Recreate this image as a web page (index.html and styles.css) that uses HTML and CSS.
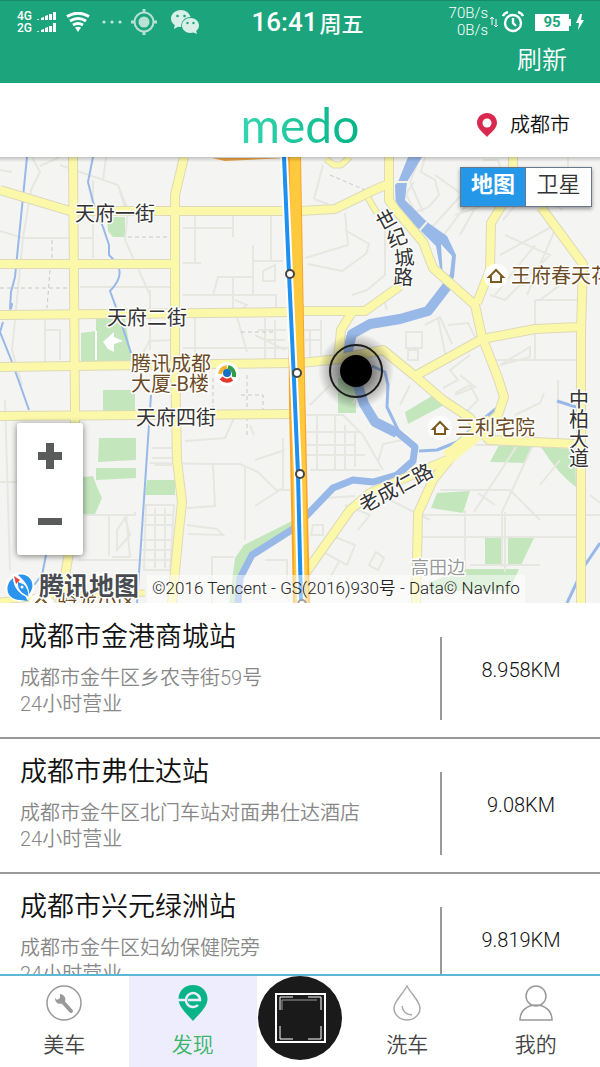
FILE: index.html
```html
<!DOCTYPE html>
<html lang="zh-CN">
<head>
    <meta charset="UTF-8">
    <meta name="viewport" content="width=device-width, initial-scale=1.0">
    <title>medo - 发现</title>
    <link rel="stylesheet" href="styles.css">
</head>
<body>
<div class="app">

    <div class="topbar">
        <div class="status">
            <div class="status-left">
                <div class="network"><span>4G</span><span>2G</span></div>
                <svg class="icon" width="20" height="22" viewBox="0 0 20 22" fill="#fff">
                    <path d="M0 9l3-1v1zM5 7l3-1v3H5zM9 5l3-1v5H9zM13 3h3v6h-3zM17 1h3v8h-3zM0 21l3-1v1zM5 19l3-1v3H5zM9 17l3-1v5H9zM13 15h3v6h-3zM17 12h3v9h-3z"/>
                </svg>
                <svg class="icon wifi" width="24" height="20" viewBox="0 0 24 20" fill="none" stroke="#fff" stroke-width="3">
                    <path d="M1 4.500Q12-2 23 4.500M4 9Q12 4 20 9M7 13Q12 10 17 13"/>
                    <path d="M9 15.500Q12 14 15 15.500L12 20z" fill="#fff" stroke="none"/>
                </svg>
                <svg class="icon dots" width="20" height="4" viewBox="0 0 20 4" fill="#c5e8dc">
                    <circle cx="2" cy="2" r="1.600"/><circle cx="10" cy="2" r="1.600"/><circle cx="18" cy="2" r="1.600"/>
                </svg>
                <svg class="icon locate" width="26" height="26" viewBox="0 0 26 26" fill="none" stroke="#b9e2d5" stroke-width="2">
                    <circle cx="13" cy="13" r="9.500"/>
                    <circle cx="13" cy="13" r="5.500" fill="#b9e2d5" stroke="none"/>
                    <path d="M13 0v4M13 22v4M0 13h4M22 13h4" stroke-width="3"/>
                </svg>
                <svg class="icon" width="28" height="24" viewBox="0 0 28 24" fill="#d9f0e8">
                    <path d="M10 0C4.500 0 0 3.800 0 8.500c0 2.700 1.400 5 3.700 6.500L3 19l4-2.300c1 .2 2 .3 3.200.3C10 11 14 7 19.500 7 18.500 3 14.500 0 10 0z"/>
                    <path d="M19.500 8C14.800 8 11 11.300 11 15.500S14.800 23 19.500 23c1 0 2-.1 3-.4L26 24l-.8-3c1.700-1.400 2.800-3.300 2.800-5.500C28 11.300 24.200 8 19.500 8z"/>
                    <g fill="#1ca57c"><circle cx="6.500" cy="6" r="1.300"/><circle cx="13.500" cy="6" r="1.300"/><circle cx="16.500" cy="13" r="1.200"/><circle cx="22.500" cy="13" r="1.200"/></g>
                </svg>
            </div>
            <div class="clock">16:41<span class="weekday">周五</span></div>
            <div class="status-right">
                <div class="speed"><span>70B/s</span><span>0B/s</span></div>
                <svg class="icon" width="8" height="12" viewBox="0 0 8 12" fill="none" stroke="#fff">
                    <path d="M2 9V1M0 3l2-2 2 2M6 3v8M4 9l2 2 2-2"/>
                </svg>
                <svg class="icon alarm" width="22" height="22" viewBox="0 0 22 22" fill="none" stroke="#fff" stroke-width="2.400">
                    <circle cx="11" cy="12" r="8"/>
                    <path d="M11 7v5l3 3M1 5Q2 2 6 1M21 5Q20 2 16 1"/>
                </svg>
                <div class="battery">95</div>
                <svg class="icon bolt" width="8" height="16" viewBox="0 0 8 16" fill="#fff"><path d="M4 0L0 9h3L2 16l6-10H5l1-6z"/></svg>
            </div>
        </div>
        <div class="toolbar"><button class="refresh" type="button">刷新</button></div>
    </div>

    <header class="header">
        <h1 class="logo">medo</h1>
        <button class="city" type="button">
            <svg width="20" height="24" viewBox="0 0 20 24">
                <path d="M10 0C4.500 0 0 4.400 0 9.700 0 16 7 20 10 24c3-4 10-8 10-14.300C20 4.400 15.500 0 10 0z" fill="#d9294f"/>
                <circle cx="10" cy="10" r="4.500" fill="#fff"/>
            </svg>
            成都市
        </button>
    </header>

    <section class="map" aria-label="地图">
        <svg class="map-canvas" viewBox="0 157 600 446" preserveAspectRatio="xMidYMid slice">
            <defs>
                <radialGradient id="halo">
                    <stop offset="0.400" stop-color="#000" stop-opacity="0.500"/>
                    <stop offset="1" stop-color="#000" stop-opacity="0"/>
                </radialGradient>
                <g id="roads">
                    <path d="M73 157L75 410V520L60 603"/>
                    <path d="M184 157L175 195V360L177 460L182 502L178 540L172 603"/>
                    <path d="M0 190L70 211H290M0 264H173M0 315L110 314L290 312M0 367L290 363M0 416L290 414"/>
                    <path d="M300 211L335 209L372 191L388 184M389 157V200L395 209L423 242L433 268L475 305L482 337L498 378L504 397L498 415L457 450L433 480L418 513L416 603"/>
                    <path d="M300 311L365 311L400 286M352 312L341 330L338 360M300 363L340 359L383 350L415 376L443 400L470 418L489 440L576 444"/>
                    <path d="M415 376L482 339L535 329L578 327M513 157V175M502 205L491 223L490 270L477 303M541 207L583 264L581 330V603"/>
                    <path d="M302 578L350 510L370 493L447 460"/>
                </g>
            </defs>

            <rect y="157" width="600" height="446" fill="#f4f4f3"/>

            <g class="park">
                <path d="M107 217h18v20h-12l-5-6zM81 333l15-2v-12h29l7 42H81zM103 390h32v21h-32zM99 438h37v22l-38 2zM96 468h40v10l-40 2zM83 477l10-1 4 11 5 11-7 16H83zM147 480h28v15h-30z"/>
                <path d="M338 378h18v35h-18zM405 412l27-16 14 8-38 20zM500 443l33 3-8 17-35-1zM541 447l34 2 1 38q-18-13-35-40zM437 493l33-2-7 22-32-5zM485 538h18v27h-18zM508 538h26l-13 27h-13zM462 569h57l-10 22h-80v-8z"/>
                <path d="M292 521L244 545L235 558L229 603h10l5-35 12-15 37-23z"/>
            </g>
            <path d="M95 331h2v29h-2zM103 342l11-10v5l9 4-9 3v8l-6-3z" fill="#fff"/>

            <g class="lane">
                <path d="M0 170l12 2M32 157l8 15L31 190 23 238 13 340 12 350 22 385M40 166l20-9M60 165l58 20 8 26M106 157l-3 23M0 231l23 7h47M80 238h12M93 180v78M118 185l10 25-3 30 25 55v45l-12 22M80 287h90M150 290v60M148 341l27-1"/>
                <path d="M45 320v46M45 330h15v30M0 482h17M5 400l5 170M85 515h50v-3M109 514v42M126 514l4 43h-18M117 530l8-12 5 17-13 15zM183 228h50M195 215v48M183 263h18M233 215v22M253 245v50M271 215v47M253 261h30M233 277v35M213 295l5-18h36M183 295h93v17M275 265v16h-12v-10z"/>
                <path d="M195 317v50M183 348h107M237 317l10 35M265 318v45M275 320v43M258 330h28M265 340h20M235 300l12 5-10 8M255 335l30 15M152 448h20M152 458h22M154 465h18M146 505h28l-4 65h-26zM144 515h29M143 525h30M142 540h29M142 550h28M155 508v60M165 508v60M138 560h32"/>
                <path d="M185 441l40-3 10-22M150 463l64 1 26 0 18 8 18 18h14M213 464l2 42-28 2M245 465v75M250 425l4 10M255 460l30-10M283 438v50l-28 18M187 525l30 4 6 6-35-1M212 603v-46h22M265 560h22v40M78 560h60"/>
                <path d="M314 199l9-34M314 199l14 5M345 213l3 32-43 13M345 230l24 14-3 10-24 17-34-7M385 215v60l-18 15-15 5M384 300l3 10M414 182l-8 12 9 18 14-5 10-12-4-15-14-8 4-15M420 157l-10 25 13 30M425 235l50-55M435 175l35 25-30 40M455 215l45-15M460 235l25-45M483 160h15l5 15M503 220l25-30 35 20M505 235l45 20-45 45-15-5M500 255l55-30M495 295l40-50M540 300l20-15M568 157v18M557 225l-30 70"/>
                <path d="M535 300v60h45M495 360h85M535 300h45M406 332h16v16h-16zM408 350h10v10h-10zM438 318l8 40M425 325l15-8 12 27M448 325l20-2 10 20-25 8M470 355l-20 15 8 10-15 8M500 365l30-18v10zM460 375l15 12-20 8M310 330v28M321 320v38M303 330h18M305 340h17"/>
                <path d="M305 415h38l20 20 20 35M305 432h55M305 445h50M305 455h60M317 415v55M335 415v55M345 425v45M355 432v35M310 470h70M365 385l-12 18M330 385l-20 20M378 462l5-18 23-5M410 385l-10 20M455 393l15-8 8 15-12 12M515 415l25-12 4-10M558 380v60M475 445l50 0M532 447l-30 65v55M516 447l-42 65M440 490h70l30 30M420 515h180M422 537h155M465 510v60M505 512v60M470 565h70M478 493l17 12M540 485l20-25M590 495l10 8"/>
                <path d="M310 510l15-12 30-2M345 505l25 10-12 15M330 535l25 10-8 20-27-15M376 552l8 6-6 12-9-5zM340 560l-20 35M313 525h10v10h-12zM320 550l-10 20M390 500l40 20"/>
            </g>
            <g class="path-dash"><path d="M52 240v25M50 270l-3 38M0 288h70M128 237h42M330 175l35 15M241 332h35M213 378v30M247 375v60M241 395h22v18h-20"/></g>

            <g class="water">
                <path d="M27 157l-4 40-8 80-4 15-1 17 2-5 -1 5M3 322l-3 10 12 30 17 48M93 157l-5 25 5 20 10 25 6 18 0 10 5 5M119 269q3 10-9 22l3 8 5 14 13 40M151 395L137 603M47 550l-5 25-8 10" stroke-width="2"/>
                <path d="M448 285L428 311L400 319L370 324L352 334L348 350L356 380L364 404L375 422L397 433" stroke-width="10"/>
                <path d="M397 432L415 447L413 461L397 475L373 482L353 480L333 488L310 512L293 529L252 555L240 578L238 603" stroke-width="7"/>
                <path d="M372 366l13 6 3 13-1 22 12 25M419 451l18-1 20-8 20-18 20-16M557 401l25 8M600 543l-15 22-18 38" stroke-width="3"/>
            </g>
            <path class="river" d="M408 157h14l-15 25-2 18 22 22 20 14 9 19-2 22-5 10-5-2 6-11 2-18-11-12 2 35-2-5-5-28-16-16-24-20-1-25 3-3z"/>
            <path d="M396 182h14M419 231l8-9" stroke="#f4f4e4" stroke-width="2"/>

            <use href="#roads" class="casing"/>
            <use href="#roads" class="road"/>
            <path class="casing minor" d="M368 198l9 15M326 159l8 6h7l9-8M0 601l50-5 95-3"/>
            <path class="road minor" d="M368 198l9 15M326 159l8 6h7l9-8M0 601l50-5 95-3"/>
            <path class="junction" d="M447 458l45-37"/>
            <path d="M212 158h75l-62 3z" fill="#e8a040"/>

            <path d="M287 157h14l4 223 5 223h-17l-4-200z" fill="#f8a52b"/>
            <path d="M290 157h10l4 223 4 223h-13l-4-200z" fill="#ffc93e"/>
            <path d="M284 157L289 274L294 380L298 474L301 603" fill="none" stroke="#fff" stroke-width="8"/>
            <path d="M284 157L289 274L294 380L298 474L301 603" fill="none" stroke="#1e90f0" stroke-width="4"/>
            <g fill="#fff" stroke="#444" stroke-width="2">
                <circle cx="290" cy="274" r="4"/><circle cx="297" cy="373" r="4"/><circle cx="300" cy="474" r="4"/><circle cx="302" cy="604" r="4"/>
            </g>

            <g class="street">
                <text x="75" y="221">天府一街</text>
                <text x="107" y="325">天府二街</text>
                <text x="136" y="425">天府四街</text>
                <text x="381 390 395 393" y="231 248 266 284" rotate="-28 -20 -6 2">世纪城路</text>
                <text x="569 569 569 569" y="407 427 447 466">中柏大道</text>
                <text transform="translate(364 513) rotate(-28)">老成仁路</text>
            </g>
            <g class="place">
                <text x="131" y="371">腾讯成都</text>
                <text x="131" y="391">大厦-B楼</text>
                <text x="511" y="283">王府春天花园</text>
                <text x="455" y="435">三利宅院</text>
                <text x="57" y="609">骑龙小区</text>
            </g>
            <text class="village" x="411" y="574">高田边</text>

            <circle cx="227" cy="374" r="12" fill="#fff"/>
            <g fill="none" stroke-width="4">
                <path d="M220 374q1-6 7-7" stroke="#f2b52b"/>
                <path d="M228 367q7 2 6 10" stroke="#2f9e44"/>
                <path d="M232 379q-6 4-11-1" stroke="#e23a2e"/>
            </g>
            <circle cx="227" cy="373" r="4" fill="#1670c4"/>
            <g fill="#fff"><circle cx="496" cy="276" r="12"/><circle cx="440" cy="428" r="12"/><circle cx="41" cy="605" r="12"/></g>
            <g fill="none" stroke="#7a5a20" stroke-width="2">
                <path d="M489 277l7-7 7 7h-2v5h-10v-5zM433 429l7-7 7 7h-2v5h-10v-5zM35 604l6-6 6 6"/>
            </g>

            <circle cx="356" cy="371" r="38" fill="url(#halo)"/>
            <circle cx="356" cy="371" r="26" fill="none" stroke="#1c1c1c" stroke-width="2"/>
            <circle cx="356" cy="371" r="16"/>
        </svg>

        <div class="map-type">
            <button class="type-btn selected" type="button">地图</button>
            <button class="type-btn" type="button">卫星</button>
        </div>

        <div class="zoom">
            <button type="button" aria-label="放大">
                <svg width="24" height="26" viewBox="0 0 24 26" fill="#5a5c5c"><path d="M8 0h8v9h8v8h-8v9H8v-9H0V9h8z"/></svg>
            </button>
            <button type="button" aria-label="缩小">
                <svg width="24" height="8" viewBox="0 0 24 8" fill="#5a5c5c"><path d="M0 0h24v7H0z"/></svg>
            </button>
        </div>

        <div class="map-credit">
            <svg width="30" height="30" viewBox="0 0 30 30">
                <circle cx="15" cy="15" r="14.500" fill="#fff"/>
                <path d="M8 6C-2 14 2 28 15 28l8 1-3-5C14 22 8 14 8 6z" fill="#2a94ee"/>
                <path d="M13 3c12-3 19 10 11 19 0-7-3-12-11-19z" fill="#2a94ee"/>
                <path d="M12 9l7 3q5 5 5 13-8-3-11-9z" fill="#2a94ee" stroke="#fff"/>
                <circle cx="17" cy="15" r="1.500" fill="#fff"/>
                <path d="M9 4l6 4-4 4z" fill="#e8433a"/>
            </svg>
            <span class="brand">腾讯地图</span>
            <span class="copyright">©2016 Tencent - GS(2016)930号 - Data© NavInfo</span>
        </div>
    </section>

    <ul class="stations">
        <li class="station">
            <div class="info">
                <h2>成都市金港商城站</h2>
                <p>成都市金牛区乡农寺街59号</p>
                <p>24小时营业</p>
            </div>
            <div class="distance">8.958KM</div>
        </li>
        <li class="station">
            <div class="info">
                <h2>成都市弗仕达站</h2>
                <p>成都市金牛区北门车站对面弗仕达酒店</p>
                <p>24小时营业</p>
            </div>
            <div class="distance">9.08KM</div>
        </li>
        <li class="station">
            <div class="info">
                <h2>成都市兴元绿洲站</h2>
                <p>成都市金牛区妇幼保健院旁</p>
                <p>24小时营业</p>
            </div>
            <div class="distance">9.819KM</div>
        </li>
    </ul>

    <nav class="tabs">
        <a class="tab" href="#">
            <svg width="36" height="36" viewBox="0 0 36 36" fill="none" stroke="#999">
                <circle cx="18" cy="18" r="17" stroke-width="1.500"/>
                <path d="M16 16l9 10" stroke-width="4" stroke-linecap="round"/>
                <path d="M14 9l0 4-3 2-2-2c0 5 4 7 8 5s3-8-3-9z" fill="#999" stroke="none"/>
            </svg>
            美车
        </a>
        <a class="tab active" href="#">
            <svg width="30" height="36" viewBox="0 0 30 36" fill="none">
                <path d="M15 0C6.700 0 .500 6 .500 14 .500 22 9 29 15 36c6-7 14.500-14 14.500-22C29.500 6 23.300 0 15 0z" fill="#08b488"/>
                <path d="M0 15h7M10 15h12a7 7 0 1 0-2 5" stroke="#ededfd" stroke-width="2.500"/>
            </svg>
            发现
        </a>
        <a class="scan" href="#" aria-label="扫一扫">
            <svg width="84" height="84" viewBox="0 0 84 84" fill="none" stroke="#fff">
                <circle cx="42" cy="42" r="42" fill="#1a1a1a" stroke="none"/>
                <rect x="18" y="18" width="49" height="48" stroke-width="2"/>
                <path d="M22 34V21h13M50 21h13v13M22 50v13h13M50 63h13V50"/>
                <path d="M24 34V24h35" stroke="#999"/>
            </svg>
        </a>
        <a class="tab" href="#">
            <svg width="28" height="36" viewBox="0 0 28 36" fill="none" stroke="#aaa" stroke-width="1.500">
                <path d="M14 1C10 9 1 16 1 23a13 12 0 0 0 26 0C27 16 18 9 14 1z"/>
                <path d="M9 21q1 8 10 9"/>
            </svg>
            洗车
        </a>
        <a class="tab" href="#">
            <svg width="34" height="36" viewBox="0 0 34 36" fill="none" stroke="#999" stroke-width="1.500">
                <circle cx="17" cy="11" r="10"/>
                <path d="M1 35C1 26 8 20 17 20s16 6 16 15z"/>
            </svg>
            我的
        </a>
    </nav>
</div>
</body>
</html>
```

FILE: styles.css
```css
:root {
    --green: #1ca57c;
    --blue: #2597e8;
}

* {
    box-sizing: border-box;
    margin: 0;
    padding: 0;
}

body {
    font-family: Roboto, 'Noto Sans CJK SC', sans-serif;
    font-weight: 350;
    background-color: #fff;
    color: #111;
}

button {
    font: inherit;
    color: inherit;
    background: none;
    border: 0;
}

a {
    text-decoration: none;
}

svg {
    display: block;
}

.app {
    display: flex;
    flex-direction: column;
    height: 100vh;
}

/* status bar + toolbar */
.topbar {
    flex: none;
    background-color: var(--green);
    border-top: 1px solid #178a68;
    color: #fff;
}

.status {
    display: grid;
    grid-template-columns: 1fr auto 1fr;
    align-items: center;
    height: 42px;
    padding: 0 2px 0 17px;
}

.status-left,
.status-right {
    display: flex;
    align-items: center;
}

.status-right {
    justify-content: flex-end;
    padding-right: 14px;
}

.icon {
    flex: none;
}

.network {
    display: flex;
    flex-direction: column;
    margin-right: 4px;
    font-size: 12px;
    line-height: 12px;
    font-weight: 500;
}

.wifi {
    margin: 0 12px 0 10px;
}

.locate {
    margin: 0 14px 0 9px;
}

.clock {
    display: flex;
    align-items: center;
    gap: 2px;
    font-size: 26px;
    font-weight: 500;
}

.weekday {
    font-size: 22px;
}

.speed {
    display: flex;
    flex-direction: column;
    margin-right: 2px;
    font-size: 15px;
    line-height: 17px;
    text-align: right;
}

.alarm {
    margin: 0 11px 0 4px;
}

.battery {
    position: relative;
    width: 34px;
    background-color: #fff;
    color: var(--green);
    font-size: 15px;
    line-height: 17px;
    font-weight: 700;
    text-align: center;
}

.battery::after {
    content: '';
    position: absolute;
    top: 5px;
    right: -2px;
    width: 2px;
    height: 7px;
    background-color: #fff;
}

.bolt {
    margin-left: 7px;
}

.toolbar {
    display: flex;
    justify-content: flex-end;
    padding: 0 33px 4px;
}

.refresh {
    font-size: 25px;
    line-height: 36px;
}

/* header */
.header {
    flex: none;
    display: grid;
    grid-template-columns: 1fr auto 1fr;
    align-items: center;
    height: 74px;
    padding-top: 10px;
}

.logo {
    grid-column: 2;
    font-family: Lato, sans-serif;
    font-size: 48px;
    line-height: 48px;
    font-weight: 400;
    color: transparent;
    background: linear-gradient(90deg, #36d6b0, #04b486);
    background-clip: text;
    -webkit-background-clip: text;
}

.city {
    display: flex;
    align-items: center;
    justify-self: end;
    gap: 13px;
    margin-right: 30px;
    font-size: 20px;
    line-height: 24px;
}

/* map */
.map {
    position: relative;
    flex: none;
    height: 446px;
    overflow: hidden;
}

.map::before {
    content: '';
    position: absolute;
    top: 0;
    left: 0;
    right: 0;
    height: 5px;
    background: linear-gradient(rgba(0, 0, 0, 0.2), transparent);
}

.map-canvas {
    width: 100%;
    height: 100%;
}

.park {
    fill: #c3e6bd;
}

.lane {
    fill: none;
    stroke: #e7e7e1;
    stroke-width: 2;
}

.path-dash {
    fill: none;
    stroke: #c8c8c4;
    stroke-width: 1;
    stroke-dasharray: 4 3;
}

.water {
    fill: none;
    stroke: #98b8e8;
    stroke-linejoin: round;
}

.river {
    fill: #98b8e8;
}

.casing {
    fill: none;
    stroke: #dcdab8;
    stroke-width: 10;
    stroke-linejoin: round;
}

.road {
    fill: none;
    stroke: #fcf8aa;
    stroke-width: 8;
    stroke-linejoin: round;
}

.casing.minor {
    stroke-width: 7;
}

.road.minor {
    stroke-width: 5;
}

.junction {
    fill: none;
    stroke: #fcf8aa;
    stroke-width: 14;
}

.street,
.place,
.village {
    font-size: 20px;
    font-weight: 400;
    fill: #333;
    stroke: #fff;
    stroke-width: 3px;
    stroke-linejoin: round;
    paint-order: stroke;
}

.place {
    fill: #6b4a24;
}

.village {
    font-size: 18px;
    fill: #999;
}

.map-type {
    position: absolute;
    top: 10px;
    right: 8px;
    display: flex;
    border: 1px solid #68788a;
    background-color: #fff;
    box-shadow: 0 2px 4px rgba(0, 0, 0, 0.4);
}

.type-btn {
    width: 65px;
    padding-bottom: 4px;
    font-size: 22px;
    line-height: 34px;
    color: #333;
}

.type-btn.selected {
    background-color: var(--blue);
    border-right: 1px solid #68788a;
    color: #fff;
    font-weight: 700;
}

.zoom {
    position: absolute;
    left: 17px;
    bottom: 48px;
    display: flex;
    flex-direction: column;
    background-color: #fff;
    border-radius: 3px;
    box-shadow: 0 1px 6px rgba(0, 0, 0, 0.5);
}

.zoom button {
    display: flex;
    align-items: center;
    justify-content: center;
    width: 66px;
    height: 66px;
}

.map-credit {
    position: absolute;
    left: 5px;
    bottom: 0;
    display: flex;
    align-items: center;
    height: 32px;
    white-space: nowrap;
}

.brand {
    margin: 0 8px 0 4px;
    font-size: 25px;
    line-height: 32px;
    font-weight: 700;
    color: #484c50;
    -webkit-text-stroke: 3px #fff;
    paint-order: stroke;
}

.copyright {
    align-self: flex-end;
    padding: 0 5px 2px;
    background-color: rgba(255, 255, 255, 0.5);
    font-size: 17px;
    line-height: 26px;
    color: #222;
}

/* station list */
.stations {
    flex: 1;
    min-height: 0;
    padding-top: 1px;
    overflow-y: auto;
    scrollbar-width: none;
    list-style: none;
}

.station {
    display: flex;
    border-bottom: 2px solid #999;
}

.info {
    flex: 1;
    padding: 17px 20px 20px;
}

.info h2 {
    margin-bottom: 12px;
    font-size: 27px;
    line-height: 32px;
    font-weight: inherit;
}

.info p {
    font-size: 20px;
    line-height: 26px;
    color: #888;
}

.distance {
    display: flex;
    align-items: center;
    justify-content: center;
    width: 160px;
    margin: 33px 0 17px;
    padding-bottom: 18px;
    border-left: 2px solid #999;
    font-size: 20px;
}

/* bottom tabs */
.tabs {
    flex: none;
    display: flex;
    border-top: 2px solid #5cb8d6;
    background-color: #fff;
}

.tab {
    flex: 3;
    display: flex;
    flex-direction: column;
    align-items: center;
    gap: 9px;
    padding: 9px 0 7px;
    font-size: 21px;
    line-height: 30px;
    color: #444;
}

.tab.active {
    background-color: #ededfd;
    color: #3cb56c;
}

.scan {
    flex: 2;
    display: flex;
    justify-content: center;
}
```
